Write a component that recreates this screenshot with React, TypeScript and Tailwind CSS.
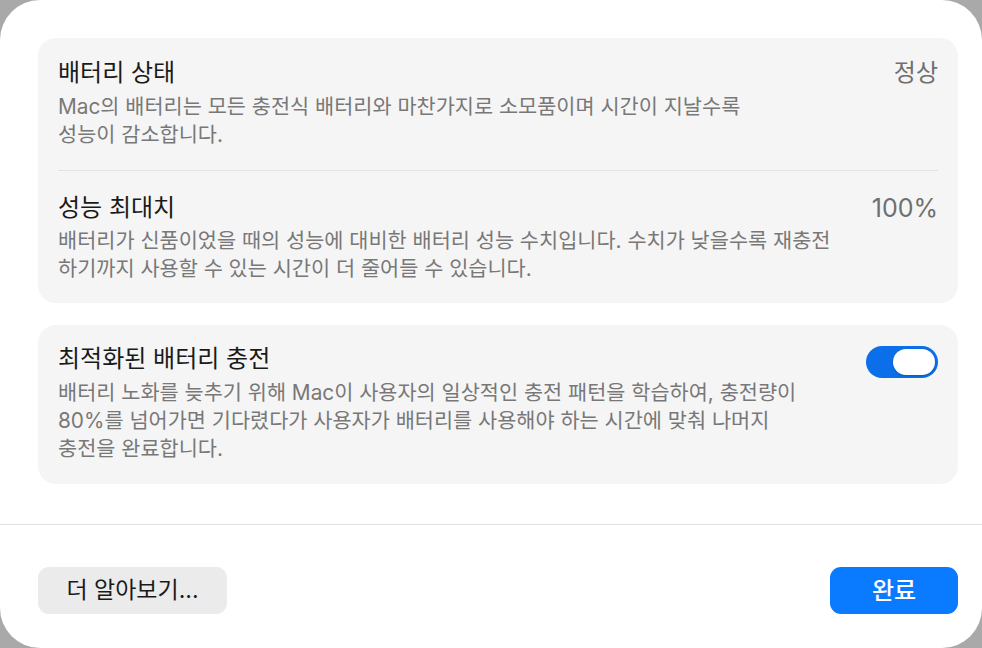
import React from "react"

function Toggle() {
  return (
    <div className="flex h-[32px] w-[72px] shrink-0 items-center justify-end rounded-full bg-[#0a6fe8] pr-[3px]">
      <div className="h-[26px] w-[42px] rounded-full bg-white shadow-[0_1px_2px_rgba(0,0,0,0.2)]" />
    </div>
  )
}

function Row({ title, value, children, first }: { title: string; value?: React.ReactNode; children: React.ReactNode; first?: boolean }) {
  return (
    <div className={first ? "pt-[21px] pb-[21px]" : "pt-[23px] pb-[20px]"}>
      <div className="flex items-start justify-between gap-6">
        <div className="text-[24px] leading-[28px] text-[#1a1a1a]">{title}</div>
        {value}
      </div>
      <p className={(first ? "mt-[6px]" : "mt-[5px]") + " text-[20.8px] leading-[28px] text-[#787878]"}>{children}</p>
    </div>
  )
}

export default function App() {
  return (
    <div className="h-[648px] w-full bg-[#a9a9a9] font-['Inter','Noto_Sans_CJK_KR',sans-serif]">
      <div className="flex h-full flex-col rounded-[40px] bg-white">
        <div className="flex flex-col gap-[22px] pl-[38px] pr-[24px] pt-[38px]">
          <div className="rounded-[18px] bg-[#f5f5f5] px-5">
            <Row first title="배터리 상태" value={<span className="text-[24px] leading-[28px] text-[#6f6f6f]">정상</span>}>
              Mac의 배터리는 모든 충전식 배터리와 마찬가지로 소모품이며 시간이 지날수록
              <br />
              성능이 감소합니다.
            </Row>
            <div className="h-px bg-[#e2e2e2]" />
            <Row title="성능 최대치" value={<span className="text-[25px] leading-[28px] text-[#6f6f6f]">100%</span>}>
              배터리가 신품이었을 때의 성능에 대비한 배터리 성능 수치입니다. 수치가 낮을수록 재충전
              <br />
              하기까지 사용할 수 있는 시간이 더 줄어들 수 있습니다.
            </Row>
          </div>

          <div className="rounded-[18px] bg-[#f5f5f5] px-5 pt-[20px] pb-[21px]">
            <div className="flex h-[28px] items-start justify-between gap-6">
              <div className="text-[24px] leading-[28px] text-[#1a1a1a]">최적화된 배터리 충전</div>
              <div className="h-[28px] pt-[1px]">
                <Toggle />
              </div>
            </div>
            <p className="mt-[6px] text-[20.8px] leading-[28px] text-[#787878]">
              배터리 노화를 늦추기 위해 Mac이 사용자의 일상적인 충전 패턴을 학습하여, 충전량이
              <br />
              80%를 넘어가면 기다렸다가 사용자가 배터리를 사용해야 하는 시간에 맞춰 나머지
              <br />
              충전을 완료합니다.
            </p>
          </div>
        </div>

        <div className="mt-[40px] border-t border-[#e0e0e0]" />

        <div className="flex items-center justify-between pl-[38px] pr-[24px] pt-[42px]">
          <button className="h-[47px] w-[189px] rounded-[11px] bg-[#ebebeb] text-[23px] text-[#1a1a1a]">더 알아보기...</button>
          <button className="h-[47px] w-[128px] rounded-[11px] bg-[#0a7aff] text-[24px] font-medium text-white">완료</button>
        </div>
      </div>
    </div>
  )
}
